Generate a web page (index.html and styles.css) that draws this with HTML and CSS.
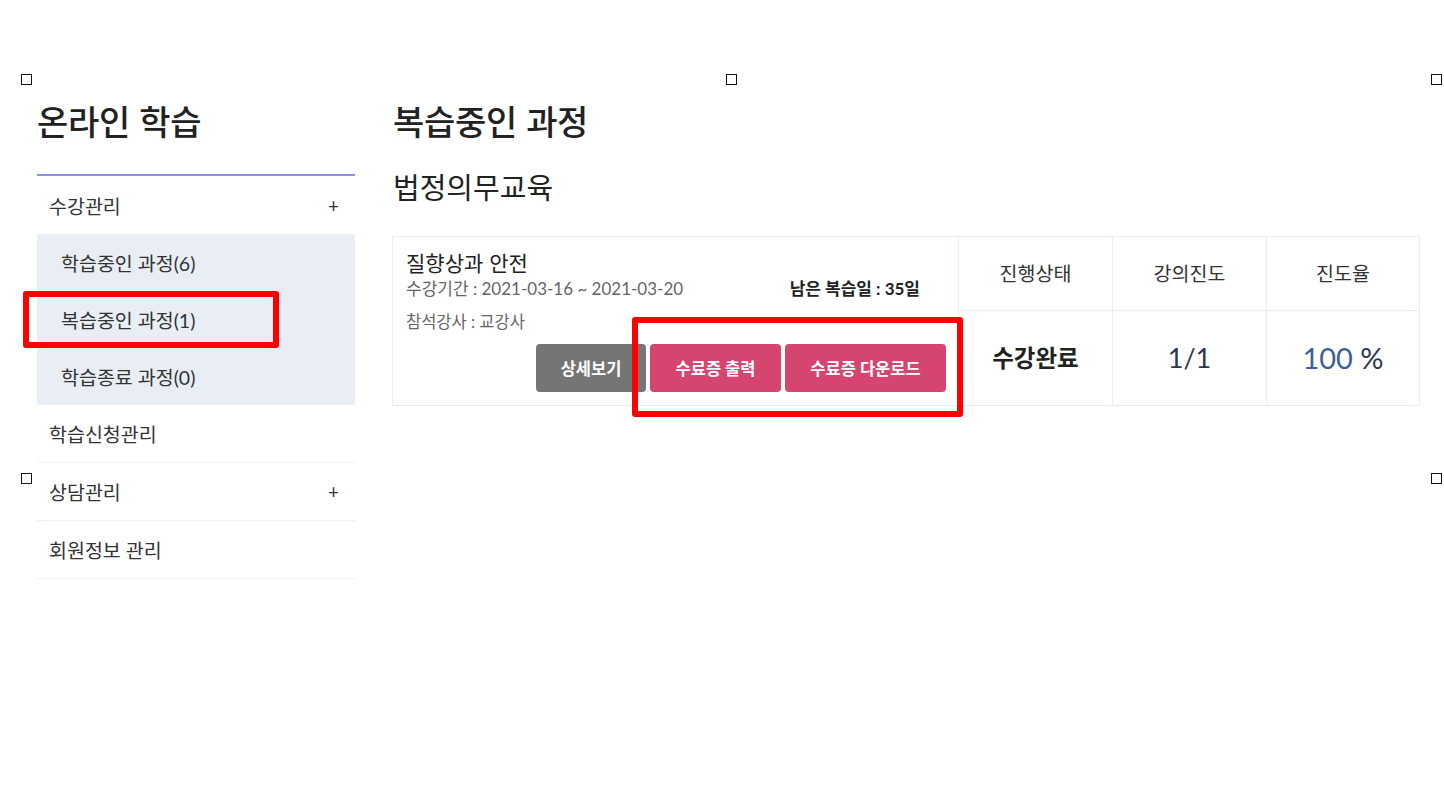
FILE: index.html
```html
<!DOCTYPE html>
<html lang="ko">
<head>
<meta charset="utf-8">
<title>온라인 학습</title>
<link rel="stylesheet" href="styles.css">
</head>
<body>
<div class="page">
  <aside class="sidebar">
    <h1 class="side-title">온라인 학습</h1>
    <ul class="menu">
      <li class="menu-item has-sub"><span>수강관리</span><span class="plus">+</span></li>
      <li class="submenu">
        <div class="sub-item">학습중인 과정(6)</div>
        <div class="sub-item">복습중인 과정(1)</div>
        <div class="sub-item">학습종료 과정(0)</div>
      </li>
      <li class="menu-item bordered"><span>학습신청관리</span></li>
      <li class="menu-item bordered"><span>상담관리</span><span class="plus">+</span></li>
      <li class="menu-item bordered"><span>회원정보 관리</span></li>
    </ul>
  </aside>
  <main class="main">
    <h2 class="main-title">복습중인 과정</h2>
    <h3 class="sub-title">법정의무교육</h3>
    <div class="course">
      <div class="course-info">
        <div class="course-name">질향상과 안전</div>
        <div class="course-meta">
          <span class="period">수강기간 : 2021-03-16 ~ 2021-03-20</span>
          <span class="remain">남은 복습일 : 35일</span>
        </div>
        <div class="teacher">참석강사 : 교강사</div>
        <div class="btns">
          <button class="btn btn-gray">상세보기</button>
          <button class="btn btn-pink">수료증 출력</button>
          <button class="btn btn-pink">수료증 다운로드</button>
        </div>
      </div>
      <div class="col">
        <div class="col-head">진행상태</div>
        <div class="col-body status">수강완료</div>
      </div>
      <div class="col">
        <div class="col-head">강의진도</div>
        <div class="col-body num">1/1</div>
      </div>
      <div class="col last">
        <div class="col-head">진도율</div>
        <div class="col-body num pctnum"><span class="pct">100</span>&nbsp;%</div>
      </div>
    </div>
  </main>
</div>

<div class="handle h1"></div>
<div class="handle h2"></div>
<div class="handle h3"></div>
<div class="handle h4"></div>
<div class="handle h5"></div>

<div class="mark mark-menu"></div>
<div class="mark mark-btns"></div>
</body>
</html>
```

FILE: styles.css
```css
* { box-sizing: border-box; }
html, body {
  margin: 0;
  padding: 0;
  background: #fff;
  width: 1444px;
  height: 796px;
  overflow: hidden;
  font-family: "Lato", "Noto Sans CJK KR", sans-serif;
  color: #333;
}
.page {
  display: flex;
  padding: 97px 0 0 37px;
}
.sidebar {
  width: 318px;
  flex: none;
}
.side-title {
  margin: 0;
  font-family: "Noto Sans CJK KR", sans-serif;
  font-weight: 500;
  font-size: 34px;
  line-height: 48px;
  color: #222;
  letter-spacing: -0.3px;
}
.menu {
  list-style: none;
  margin: 29px 0 0;
  padding: 0;
  border-top: 2px solid #8c8ff0;
}
.menu-item {
  display: flex;
  align-items: center;
  justify-content: space-between;
  height: 58px;
  padding: 0 16px 0 12px;
  font-size: 19.5px;
  color: #333;
}
.menu-item.bordered {
  border-bottom: 1px solid #edf0f5;
}
.plus {
  font-size: 19px;
  color: #333;
}
.submenu {
  background: #e9eef5;
}
.sub-item {
  height: 57px;
  display: flex;
  align-items: center;
  padding-left: 24px;
  font-size: 19.5px;
  color: #333;
}
.main {
  margin-left: 37px;
  width: 1028px;
  flex: none;
}
.main-title {
  margin: 0 0 0 1px;
  font-family: "Noto Sans CJK KR", sans-serif;
  font-weight: 500;
  font-size: 34px;
  line-height: 48px;
  color: #222;
  letter-spacing: -0.3px;
}
.sub-title {
  margin: 21px 0 0 1px;
  font-family: "Noto Sans CJK KR", sans-serif;
  font-weight: 400;
  font-size: 29px;
  line-height: 40px;
  color: #222;
}
.course {
  margin-top: 30px;
  display: flex;
  border: 1px solid #e8edf5;
  height: 170px;
}
.course-info {
  width: 566px;
  flex: none;
  border-right: 1px solid #e8edf5;
  padding: 11px 12px 0 13px;
  display: flex;
  flex-direction: column;
}
.course-name {
  font-family: "Noto Sans CJK KR", sans-serif;
  font-size: 21px;
  line-height: 28px;
  color: #222;
}
.course-meta {
  display: flex;
  justify-content: space-between;
  padding-right: 26px;
  font-size: 17px;
  line-height: 24px;
  margin-top: 1px;
}
.period { color: #666; }
.remain { color: #222; font-weight: 700; }
.teacher {
  margin-top: 10px;
  font-size: 16.5px;
  line-height: 22px;
  color: #666;
}
.btns {
  display: flex;
  justify-content: flex-end;
  gap: 4px;
  margin-top: 11px;
}
.btn {
  height: 48px;
  border: none;
  border-radius: 4px;
  color: #fff;
  font-family: "Lato", "Noto Sans CJK KR", sans-serif;
  font-size: 16.5px;
  font-weight: 700;
  padding: 0;
}
.btn-gray { background: #757575; width: 110px; }
.btn-pink { background: #d64570; }
.btn-pink:nth-child(2) { width: 131px; }
.btn-pink:nth-child(3) { width: 161px; }
.col {
  width: 154px;
  flex: none;
  display: flex;
  flex-direction: column;
  border-right: 1px solid #e8edf5;
}
.col.last { border-right: none; flex: 1; }
.col-head {
  height: 74px;
  display: flex;
  align-items: center;
  justify-content: center;
  border-bottom: 1px solid #e8edf5;
  font-size: 19.5px;
  color: #333;
  padding-bottom: 3px;
}
.col-body {
  flex: 1;
  display: flex;
  align-items: center;
  justify-content: center;
  padding-bottom: 2px;
}
.status {
  font-size: 23.5px;
  font-weight: 700;
  color: #222;
}
.num {
  font-size: 27px;
  color: #2d3550;
}
.pctnum { font-size: 29px; }
.pct { color: #3c5f9e; }
.handle {
  position: absolute;
  width: 11px;
  height: 11px;
  border: 1.5px solid #111;
  background: #fff;
}
.h1 { left: 21px; top: 74px; }
.h2 { left: 726px; top: 74px; }
.h3 { left: 1431px; top: 74px; }
.h4 { left: 21px; top: 473px; }
.h5 { left: 1431px; top: 473px; }
.mark {
  position: absolute;
  border: 6px solid #ff0000;
  border-radius: 3px;
}
.mark-menu { left: 23px; top: 291px; width: 256px; height: 57px; }
.mark-btns { left: 632px; top: 317px; width: 331px; height: 100px; }
```
